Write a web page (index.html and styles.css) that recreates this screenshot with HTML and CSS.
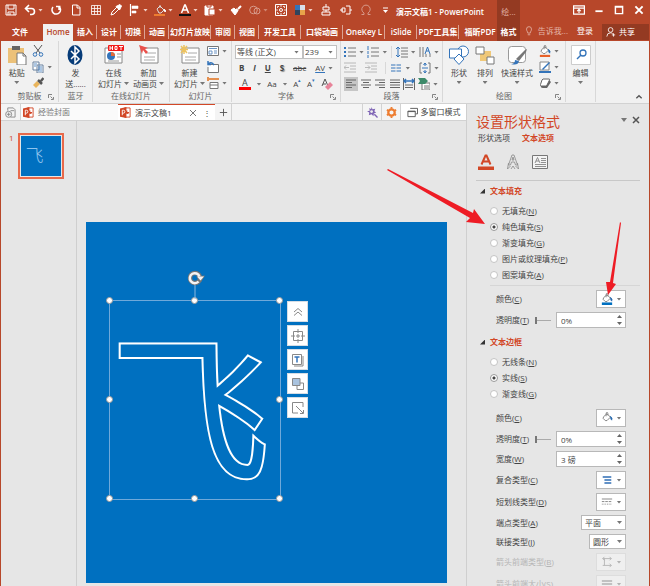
FILE: index.html
```html
<!DOCTYPE html>
<html lang="zh-CN">
<head>
    <meta charset="UTF-8">
    <meta name="viewport" content="width=device-width, initial-scale=1.0">
    <title>演示文稿1 - PowerPoint</title>
    <link rel="stylesheet" href="styles.css">
</head>
<body>

    <!-- Shared icons -->
    <svg class="sprite">
        <symbol id="ppt" viewBox="0 0 12 12">
            <path d="M5 1h6v10H5z" fill="#fff" stroke="#d24726"/>
            <path d="M8 3.500a2 2 0 1 0 2 2H8z" fill="#d24726"/>
            <path d="M0 1.500 7 0v12L0 10.500z" fill="#d24726"/>
            <path d="M2.500 9V3.500h1.200a1.500 1.500 0 0 1 0 3.200H2.500" fill="none" stroke="#fff"/>
        </symbol>
        <symbol id="bucket" viewBox="0 0 14 14">
            <path d="M3 5.500 7 2l4 4-4 4H5L2.500 7.500z" fill="#fff" stroke="#666" stroke-width=".9"/>
            <path d="M6 5V1.500a1 1 0 0 1 2 0V4" fill="none" stroke="#666" stroke-width=".8"/>
            <path d="M11 5q3 2 1.500 4.500Q11 9 11 5z" fill="#2b6cb0" stroke="#2b6cb0" stroke-width=".8"/>
        </symbol>
        <symbol id="launcher" viewBox="0 0 6 6">
            <path d="M.5 4V.5H4M2.500 2.500l2 2M5.500 3v2.500H3" fill="none" stroke="#777" stroke-width=".9"/>
        </symbol>
    </svg>

    <!-- Title bar -->
    <header class="titlebar">
        <div class="quick">
            <button class="qbtn" aria-label="保存"><svg viewBox="0 0 12 12"><path d="M1 1h10v10H1zM3 1v4h6V1M3 11V8h6v3M5 9v2"/></svg></button>
            <button class="qbtn split" aria-label="撤消"><svg viewBox="0 0 12 12"><path d="M5 1 1.500 4.500 5 8M2 4.500h5.500a3 3 0 0 1 0 6H6" stroke-width="1.600"/></svg><i class="caret"></i></button>
            <button class="qbtn" aria-label="重复"><svg viewBox="0 0 12 12"><path d="M9 2.500A4.300 4.300 0 1 1 3 3M9 6V2.300M6 2.500h4.500" stroke-width="1.500"/></svg></button>
            <button class="qbtn" aria-label="新建"><svg viewBox="0 0 12 12"><path d="M2.500 1h5L10 3.500V11H2.500zM7 1v3h3"/></svg></button>
            <button class="qbtn" aria-label="表格"><svg viewBox="0 0 12 12"><path d="M1.500 1.500h9v9h-9zM1.500 4.500h9M1.500 7.500h9M4.500 1.500v9M7.500 1.500v9" stroke-width=".8"/></svg></button>
            <button class="qbtn" aria-label="取色器"><svg viewBox="0 0 12 12"><path d="m1 11 1-3 5-5 2 2-5 5z"/><path d="m6 2.500 3.500 3.500L11.500 2 10 .5z" fill="#fff"/></svg></button>
            <button class="qbtn split" aria-label="对齐"><svg viewBox="0 0 12 12"><path d="M1.500 0v12" stroke-width="1.200"/><path d="M3 2h6v2.500H3zM3 7h4v2H3z" fill="#fff" stroke-width=".6"/></svg><i class="caret"></i></button>
            <button class="qbtn split" aria-label="填充颜色"><svg viewBox="0 0 12 12"><path d="m3 5 3-3 4 4-3 3H5zM6 4V1" stroke="#ddd"/><path d="M10 5q3 2 1 3z" fill="#fff"/><path d="M0 10h11v2H0z" fill="#ed7d31" stroke="none"/></svg><i class="caret"></i></button>
            <button class="qbtn split" aria-label="字体颜色"><svg viewBox="0 0 12 12"><path d="m2.500 9 3.200-8h.6l3.200 8M4 6h4" stroke-width="1.500"/><path d="M0 10h12v2H0z" fill="#111" stroke="none"/></svg><i class="caret"></i></button>
            <button class="qbtn split" aria-label="粘贴"><svg viewBox="0 0 12 12"><path d="M1 2h8v9H1z" fill="#fff"/><path d="M3 1h4v2H3z" stroke="#b7472a" fill="#fff"/><path d="M5 5h6v6H5z" fill="#fff" stroke="#b7472a"/></svg><i class="caret"></i></button>
            <button class="qbtn" aria-label="格式刷"><svg viewBox="0 0 12 12"><path d="m1 6 3-2 3.500 3.500L5 11z" fill="#fff"/><path d="m6 5 2 2M8 5l3-3" stroke-width="2"/></svg></button>
            <button class="qbtn split faded" aria-label="合并形状"><svg viewBox="0 0 12 12"><circle cx="4.500" cy="6" r="3.800"/><circle cx="8" cy="7" r="3"/></svg><i class="caret"></i></button>
            <button class="qbtn" aria-label="选择"><svg viewBox="0 0 12 12"><path d="M.5.5h11v11H.5z"/><path d="M6 1v2M6 9v2M1 6h2M9 6h2M2.500 4V2.500H4M8 2.500h1.500V4M9.500 8v1.500H8M4 9.500H2.500V8" stroke-width=".8"/><circle cx="6" cy="6" r="1.500"/></svg></button>
            <button class="qbtn split" aria-label="主题"><svg viewBox="0 0 12 12"><g stroke="none"><path d="M1 1h5v5H1z" fill="#3474ba"/><path d="M6 1h5v5H6z" fill="#d8dee8"/><path d="M1 6h5v5H1z" fill="#30445c"/><path d="M6 6h5v5H6z" fill="#e8a34a"/></g></svg><i class="caret"></i></button>
            <button class="qbtn" aria-label="水平居中"><svg viewBox="0 0 12 12"><path d="M6 0v3M3 3h6v3H3zM6 6v2M2 8h8v3H2z"/></svg></button>
            <button class="qbtn" aria-label="垂直居中"><svg viewBox="0 0 12 12"><path d="M0 6h3M2 4h3v4H2zM6 2h4v8H6M10 6h2"/></svg></button>
            <button class="qbtn faded" aria-label="符号"><svg viewBox="0 0 12 12"><path d="M1.500 10.500H4V9a4.200 4.200 0 1 1 4 0v1.500h2.500"/></svg></button>
            <button class="qbtn" aria-label="自定义"><svg viewBox="0 0 12 12"><path d="M3 4h5"/><path d="m3 6 2.500 3L8 6z" fill="#fff" stroke="none"/></svg></button>
            <h1 class="app-title">演示文稿1 - PowerPoint</h1>
        </div>
        <div class="context">绘...</div>
        <div class="window">
            <button aria-label="功能区选项"><svg viewBox="0 0 10 8"><path d="M.5.5h9v7h-9zM1 2.500h8M5 6.500V4M3.500 5 5 3.500 6.500 5"/></svg></button>
            <button aria-label="最小化"><svg viewBox="0 0 10 8"><path d="M2 5h6" stroke-width="1.500"/></svg></button>
            <button aria-label="最大化"><svg viewBox="0 0 10 8"><path d="M2 1h6v6H2zM2 1.500h6" stroke-width="1.200"/></svg></button>
            <button aria-label="关闭"><svg viewBox="0 0 10 8"><path d="m2 1 6 6M8 1 2 7" stroke-width="1.600"/></svg></button>
        </div>
    </header>

    <!-- Ribbon tabs -->
    <nav class="tabs">
        <div class="tab-list">
            <a href="#" class="tab file">文件</a>
            <a href="#" class="tab active">Home</a>
            <a href="#" class="tab">插入</a>
            <a href="#" class="tab">设计</a>
            <a href="#" class="tab">切换</a>
            <a href="#" class="tab">动画</a>
            <a href="#" class="tab wide">幻灯片放映</a>
            <a href="#" class="tab">审阅</a>
            <a href="#" class="tab">视图</a>
            <a href="#" class="tab wide">开发工具</a>
            <a href="#" class="tab wide">口袋动画</a>
            <a href="#" class="tab wide">OneKey L</a>
            <a href="#" class="tab mid">iSlide</a>
            <a href="#" class="tab wide">PDF工具集</a>
            <a href="#" class="tab wide">福昕PDF</a>
        </div>
        <a href="#" class="tab context-tab">格式</a>
        <div class="account">
            <a href="#" class="tell"><svg viewBox="0 0 8 12"><path d="M2.500 8.500C2.500 6.500 1 6 1 3.800a3 3 0 0 1 6 0c0 2.200-1.500 2.700-1.500 4.700zM2.500 10.500h3"/></svg>告诉我...</a>
            <a href="#">登录</a>
            <a href="#" class="share"><svg viewBox="0 0 12 12"><circle cx="5.500" cy="3.500" r="2.800"/><path d="M1 11.500q0-4.500 4.500-4.500 1.500 0 2.500 1M9 7.500v4M7 9.500h4"/></svg>共享</a>
        </div>
    </nav>

    <!-- Ribbon -->
    <section class="ribbon">
        <div class="group clipboard">
            <div class="tools">
                <button class="big"><svg viewBox="0 0 20 20"><path d="M1 3h16v15H1z" fill="#ecc179"/><path d="M5 1h8v4H5z" fill="#666"/><path d="M10 8h6l3 3v9h-9z" fill="#fff" stroke="#777"/><path d="M16 8v3h3" fill="none" stroke="#777"/></svg>粘贴<i class="caret"></i></button>
                <div class="stack">
                    <button aria-label="剪切"><svg viewBox="0 0 12 12"><path d="m2 0 6 8M10 0 4 8" stroke="#555" fill="none"/><g fill="none" stroke="#3474ba"><circle cx="3" cy="9.500" r="1.800"/><circle cx="9" cy="9.500" r="1.800"/></g></svg></button>
                    <button aria-label="复制"><svg viewBox="0 0 12 12"><path d="M1 1h6v8H1zM5 4h6v8H5z" fill="#fff" stroke="#68819f"/><path d="M2 3h3M2 5h2M6 6h4M6 8h4M6 10h4" stroke="#3474ba" stroke-width=".8"/></svg><i class="caret"></i></button>
                    <button aria-label="格式刷"><svg viewBox="0 0 12 12"><path d="m1 8 4-4 3 3-4 4z" fill="#e9b55d"/><path d="m6 3 4 4M9 4l2.500-3" stroke="#555" stroke-width="2.500"/></svg></button>
                </div>
            </div>
            <div class="group-name">剪贴板<svg class="launch"><use href="#launcher"/></svg></div>
        </div>
        <div class="group bluetooth">
            <div class="tools">
                <button class="big"><svg viewBox="0 0 20 20"><ellipse cx="10" cy="10" rx="7.500" ry="10" fill="#063b78"/><path d="m6 6 8 8-4 4V2l4 4-8 8" fill="none" stroke="#fff" stroke-width="1.500"/></svg>发<span>送......</span></button>
            </div>
            <div class="group-name">蓝牙</div>
        </div>
        <div class="group online">
            <div class="tools">
                <button class="big"><svg viewBox="0 0 20 20"><path d="M1 3h17v15H1z" fill="#fff" stroke="#888"/><circle cx="7" cy="11" r="4" fill="#3474ba"/><path d="M7 11V7a4 4 0 0 1 4 4z" fill="#e36b3a"/><path d="M13 9h4M13 12h4M4 16h11" stroke="#999"/><rect x="4" width="16" height="6" rx="1" fill="#f21818"/><path d="M6 1v4M8.500 1v4M6 3h2.500M11 1.500h2v3h-2zM15 1.500h4M17 1.500V5" fill="none" stroke="#fff"/></svg>在线<span>幻灯片<i class="caret"></i></span></button>
                <button class="big"><svg viewBox="0 0 20 20"><path d="M2 3h17v15H2z" fill="#fff" stroke="#888"/><path d="M8 8h9M5 12h11M5 15h11" stroke="#aaa"/><path d="m0 0 9 3-3 1 3 3-2 2-3-4-1 4z" fill="#e9504b"/></svg>新加<span>动画页<i class="caret"></i></span></button>
            </div>
            <div class="group-name">在线幻灯片</div>
        </div>
        <div class="group slides">
            <div class="tools">
                <button class="big"><svg viewBox="0 0 20 20"><path d="M2 3h17v15H2z" fill="#fff" stroke="#888"/><path d="M8 8h9M5 12h11M5 15h11" stroke="#aaa"/><path d="M4 0v9M0 4.500h8M1 1l6 7M7 1 1 8" stroke="#ecc25f" stroke-width="1.500"/></svg>新建<span>幻灯片<i class="caret"></i></span></button>
                <div class="stack">
                    <button aria-label="版式"><svg viewBox="0 0 12 12"><path d="M.5 1.500h11v9H.5z" fill="#fff" stroke="#777"/><path d="M2 3.500h8M2 6h3v3H2zM7 6h3M7 8h3" fill="none" stroke="#6a93c4"/></svg><i class="caret"></i></button>
                    <button aria-label="重置"><svg viewBox="0 0 12 12"><path d="M3 3.500h8.500v8H1V6" fill="#fff" stroke="#777"/><path d="M1 3q3-3 6 1M1 0v3.500h3" fill="none" stroke="#3474ba" stroke-width="1.500"/></svg></button>
                    <button aria-label="节"><svg viewBox="0 0 12 12"><path d="M0 2h12M1 0v4" stroke="#e59050" stroke-width="2"/><path d="M3 5.500h8v6H3zM3 8h8" fill="#fff" stroke="#777"/></svg><i class="caret"></i></button>
                </div>
            </div>
            <div class="group-name">幻灯片</div>
        </div>
        <div class="group font">
            <div class="rows">
                <div class="row">
                    <span class="combo name"><input type="text" value="等线 (正文)" aria-label="字体"><i class="caret"></i></span><span class="combo size"><input type="text" value="239" aria-label="字号"><i class="caret"></i></span>
                </div>
                <div class="row letters">
                    <button><b>B</b></button>
                    <button><b><em>I</em></b></button>
                    <button><b><u>U</u></b></button>
                    <button><b class="shadow">S</b></button>
                    <button><s>abc</s></button>
                    <button class="spacing"><u>AV</u><i class="caret"></i></button>
                </div>
                <div class="row letters">
                    <button class="ink">A</button><i class="caret"></i>
                    <button>Aa</button><i class="caret"></i>
                    <button class="grow">A<sup>▴</sup></button>
                    <button>A<sup>▾</sup></button>
                    <button aria-label="清除格式"><svg viewBox="0 0 12 12"><path d="m1 8 3-7 3 7M2 6h3" fill="none" stroke="#555"/><path d="m4 9 5-5 3 3-5 5z" fill="#e8849a"/></svg></button>
                </div>
            </div>
            <div class="group-name">字体<svg class="launch"><use href="#launcher"/></svg></div>
        </div>
        <div class="group para">
            <div class="rows">
                <div class="row">
                    <button aria-label="项目符号"><svg viewBox="0 0 12 12"><path d="M4 2h8M4 6h8M4 10h8" stroke="#777"/><path d="M0 2h2M0 6h2M0 10h2" stroke="#3474ba" stroke-width="2"/></svg><i class="caret"></i></button>
                    <button aria-label="编号"><svg viewBox="0 0 12 12"><path d="M4 2h8M4 6h8M4 10h8" stroke="#777"/><path d="M1 0v4M1 5v3M1 9v3" stroke="#3474ba"/></svg><i class="caret"></i></button>
                    <button class="ruled" aria-label="行距"><svg viewBox="0 0 12 12"><path d="M5 2h7M5 5h7M5 8h7M5 11h7" stroke="#777"/><path d="M2 1v10M0 3l2-2 2 2M0 9l2 2 2-2" fill="none" stroke="#3474ba"/></svg><i class="caret"></i></button>
                    <button aria-label="文字方向"><svg viewBox="0 0 12 12"><path d="M1 1v10M4 1v10M7 8v3M11 8v3" stroke="#777"/><path d="m6 8 2.500-7L11 8M7 5h3" fill="none" stroke="#3474ba"/></svg><i class="caret"></i></button>
                </div>
                <div class="row">
                    <button class="faded" aria-label="减少缩进"><svg viewBox="0 0 12 12"><path d="M0 1h12M6 4h6M6 7h6M0 10h12M0 5.500h5M2 3.500l-2 2 2 2" fill="none" stroke="#777"/></svg></button>
                    <button class="faded" aria-label="增加缩进"><svg viewBox="0 0 12 12"><path d="M0 1h12M6 4h6M6 7h6M0 10h12M0 5.500h5M3 3.500l2 2-2 2" fill="none" stroke="#777"/></svg></button>
                    <button class="ruled" aria-label="分栏"><svg viewBox="0 0 12 12"><path d="M1 3h4.500M1 6h4.500M1 9h4.500M6.500 3H11M6.500 6H11M6.500 9H11" stroke="#3474ba"/></svg><i class="caret"></i></button>
                    <button class="last" aria-label="对齐文本"><svg viewBox="0 0 12 12"><path d="M3 1H1v10h2M9 1h2v10H9" fill="none" stroke="#777"/><path d="M3 6h6M6 1v3M6 8v3M4.500 3 6 1l1.500 2M4.500 9 6 11l1.500-2" fill="none" stroke="#3474ba"/></svg><i class="caret"></i></button>
                </div>
                <div class="row tight">
                    <button class="on" aria-label="左对齐"><svg viewBox="0 0 12 12"><path d="M1 2h10M1 4.500h6M1 7h10M1 9.500h6" stroke="#666"/></svg></button>
                    <button aria-label="居中"><svg viewBox="0 0 12 12"><path d="M1 2h10M3 4.500h6M1 7h10M3 9.500h6" stroke="#666"/></svg></button>
                    <button aria-label="右对齐"><svg viewBox="0 0 12 12"><path d="M1 2h10M5 4.500h6M1 7h10M5 9.500h6" stroke="#666"/></svg></button>
                    <button aria-label="两端对齐"><svg viewBox="0 0 12 12"><path d="M1 2h10M1 4.500h10M1 7h10M1 9.500h10" stroke="#666"/></svg></button>
                    <button aria-label="分散对齐"><svg viewBox="0 0 12 12"><path d="M.5 0v12M11.500 0v12M2 7h8M2 9.500h8" stroke="#666"/><path d="M1 3h10M3 1 1 3l2 2M9 1l2 2-2 2" fill="none" stroke="#3474ba" stroke-width="1.500"/></svg></button>
                    <button aria-label="SmartArt"><svg viewBox="0 0 12 12"><path d="M4 5h8v7H4zM6 8h5M6 10h5" fill="#fff" stroke="#777"/><path d="M0 0h7l3 3-3 3H0l2-3z" fill="#3d8a6a"/></svg><i class="caret"></i></button>
                </div>
            </div>
            <div class="group-name">段落<svg class="launch"><use href="#launcher"/></svg></div>
        </div>
        <div class="group draw">
            <div class="tools">
                <button class="big"><svg viewBox="0 0 20 20"><g fill="#fff" stroke="#3474ba"><circle cx="14" cy="6.500" r="5.500"/><path d="M.5 4h12v9H.5z"/><path d="m10 9 5 5-5 5.500L5 14z"/></g></svg>形状<i class="caret"></i></button>
                <button class="big"><svg viewBox="0 0 20 20"><path d="M5 6h11v10H5z" fill="#f0c878"/><path d="M1 2h8v7H1zM12 12h7v7h-7z" fill="#fff" stroke="#777"/></svg>排列<i class="caret"></i></button>
                <button class="big"><svg viewBox="0 0 20 20"><rect x="1.500" y="1.500" width="17" height="16" rx="3" fill="#fff" stroke="#999"/><path d="m9 14 9-9 2-1-1 3-7 9z" fill="#777"/><path d="M4 19q4 0 4-4l4 1q-1 5-8 3z" fill="#3474ba"/></svg>快速样式<i class="caret"></i></button>
                <div class="stack">
                    <button aria-label="形状填充"><svg viewBox="0 0 14 14"><use href="#bucket"/><path d="M1 11.500h12V14H1z" fill="#e8622a"/></svg><i class="caret"></i></button>
                    <button aria-label="形状轮廓"><svg viewBox="0 0 12 12"><path d="M1 1h9v8H1z" fill="#fff" stroke="#888"/><path d="m3 8 7-7 1 1-7 7z" fill="#3474ba"/><path d="M0 10h12v2H0z" fill="#3474ba"/></svg><i class="caret"></i></button>
                    <button aria-label="形状效果"><svg viewBox="0 0 12 12"><path d="M2 8q-1 3 2 3h4l4-6-2-2z" fill="#666"/><path d="M4 2h6q1 0 .5 1L8 8q-.5 1-1.500 1h-4q-1.500 0-1-1.500L3 3z" fill="#fff" stroke="#666"/></svg><i class="caret"></i></button>
                </div>
            </div>
            <div class="group-name">绘图<svg class="launch"><use href="#launcher"/></svg></div>
        </div>
        <div class="group edit">
            <div class="tools">
                <button class="big"><svg viewBox="0 0 20 20"><path d="M.5.5h19v19H.5z" fill="#fff" stroke="#ccc"/><circle cx="12" cy="8" r="3" fill="none" stroke="#3474ba" stroke-width="1.300"/><path d="m10 10-4 4" stroke="#3474ba" stroke-width="1.500"/></svg>编辑<i class="caret"></i></button>
            </div>
        </div>
        <button class="collapse" aria-label="折叠功能区"><svg viewBox="0 0 6 6"><path d="m1 4 2-2 2 2" fill="none" stroke="#555"/></svg></button>
    </section>

    <main class="main">
        <div class="left">
            <!-- Document tabs -->
            <div class="docs">
                <button class="home" aria-label="文档"><svg viewBox="0 0 12 12"><path d="M3 4V1h6l2 2v8H6" fill="none" stroke="#888"/><circle cx="4" cy="8" r="3.300" fill="none" stroke="#888"/><path d="M2 8h4M4 6v4M6 4h4" stroke="#888"/></svg></button>
                <a href="#" class="doc"><svg><use href="#ppt"/></svg>经验封面</a>
                <a href="#" class="doc current"><svg><use href="#ppt"/></svg>演示文稿1<span class="doc-end"><svg viewBox="0 0 8 8"><path d="m1 1 6 6M7 1 1 7" stroke="#777"/></svg>⋮</span></a>
                <button class="add" aria-label="新标签"><svg viewBox="0 0 12 12"><path d="M6 2v8M2 6h8" stroke="#555"/></svg></button>
                <div class="doc-tools">
                    <button aria-label="工具"><svg viewBox="0 0 12 12"><path d="m5 0 1 2.500L9 2 8 4.500 10 6 7.500 7 7 10 5 8 2 9l.5-3L0 4.500 3 4 2.500 1 4.500 2.500z" fill="#7f65b5"/><circle cx="5" cy="5" r="1.500" fill="#eee"/><path d="m8 8 3.500 3.500" stroke="#7f65b5" stroke-width="1.500"/></svg></button>
                    <button aria-label="设置"><svg viewBox="0 0 12 12"><circle cx="6" cy="6" r="3.500" fill="none" stroke="#ed7d31" stroke-width="2.500"/><path d="M6 0v2M6 10v2M1 3l1.500 1M11 3 9.500 4M1 9l1.500-1M11 9 9.500 8" stroke="#ed7d31" stroke-width="2"/></svg></button>
                    <button class="multi"><svg viewBox="0 0 12 12"><path d="M3.500 1.500h8v6h-2M1 4.500h8v6H1zM1 5h8" fill="none" stroke="#555"/></svg>多窗口模式</button>
                </div>
            </div>
            <div class="work">
                <aside class="thumbs">
                    <span>1</span>
                    <a href="#" class="thumb">飞</a>
                </aside>
                <div class="canvas">
                    <div class="slide">
                        <div class="frame">
                            <span class="glyph">飞</span>
                            <i class="dot tl"></i><i class="dot tc"></i><i class="dot tr"></i>
                            <i class="dot ml"></i><i class="dot mr"></i>
                            <i class="dot bl"></i><i class="dot bc"></i><i class="dot br"></i>
                            <svg class="rotate" viewBox="0 0 16 28"><path d="M8 14v14" stroke="#8ab8e0"/><circle cx="8" cy="7" r="5" fill="none" stroke="#777" stroke-width="4.500"/><path d="m9 5.500 9-1L14 11z" fill="#777"/><path d="M11.500 10.500a5 5 0 1 1 1-5" fill="none" stroke="#f4f4f4" stroke-width="2.500"/><path d="M10 5.500h7L13.500 9.500z" fill="#f4f4f4"/></svg>
                        </div>
                        <div class="floaters">
                            <button aria-label="收起"><svg viewBox="0 0 14 14"><path d="m3 7 4-3.500L11 7M3 10.500 7 7l4 3.500"/></svg></button>
                            <button aria-label="居中"><svg viewBox="0 0 14 14"><path d="M2.500 2.500h9v9h-9zM7 0v4M7 10v4M0 7h4M10 7h4"/><path d="M6 6h2v2H6z"/></svg></button>
                            <button aria-label="文字"><svg viewBox="0 0 14 14"><path d="M1.500 1.500h9v10h-9zM12 3v10H3"/><path d="M3.500 4h5M6 4v5.500" stroke="#3474ba" stroke-width="1.500"/></svg></button>
                            <button aria-label="图层"><svg viewBox="0 0 14 14"><path d="M6 6h6.500v6.500H6z"/><path d="M1.500 1.500H9v7H1.500z" fill="#a9c3df"/></svg></button>
                            <button aria-label="缩放"><svg viewBox="0 0 14 14"><path d="M12 6V1.500H1.500V12H7M5 5l7 7M12.500 9v3.500H9"/></svg></button>
                        </div>
                    </div>
                </div>
            </div>
        </div>

        <!-- Format pane -->
        <aside class="pane">
            <div class="pane-head">
                <h2>设置形状格式</h2>
                <button aria-label="选项"><i class="caret big-caret"></i></button>
                <button aria-label="关闭"><svg viewBox="0 0 8 8"><path d="m1 1 6 6M7 1 1 7" stroke="#555" stroke-width="1.500"/></svg></button>
            </div>
            <div class="pane-tabs">
                <a href="#">形状选项</a>
                <a href="#" class="on">文本选项</a>
            </div>
            <div class="pane-icons">
                <button aria-label="文本填充"><svg viewBox="0 0 16 16"><path d="m3.500 10.500 4-9h1l4 9M5 7.500h6" fill="none" stroke="#d24726" stroke-width="2"/><path d="M0 12.500h16V16H0z" fill="#d24726"/></svg></button>
                <button aria-label="文字效果"><svg viewBox="0 0 16 16"><path d="M3.500 11 7 1h2l3.500 10h-2l-1-3h-3l-1 3zM7 6h2L8 3zM3.500 9 2.500 15l3-3M12.500 9l1 6-3-3M6 15l2-3 2 3" fill="none" stroke="#888" stroke-width=".8"/></svg></button>
                <button aria-label="文本框"><svg viewBox="0 0 16 16"><path d="M.5 1.500h15v13H.5z" fill="#f4f4f4" stroke="#777"/><path d="M3 9 5.500 3.500 8 9M4 7h3M9 4.500h5M9 6.500h5M9 8.500h5M3 10.500h11M3 12.500h11" fill="none" stroke="#777" stroke-width=".8"/></svg></button>
            </div>

            <h3>文本填充</h3>
            <div class="radios">
                <label><input type="radio" name="fill"> 无填充(<u>N</u>)</label>
                <label><input type="radio" name="fill" checked> 纯色填充(<u>S</u>)</label>
                <label><input type="radio" name="fill"> 渐变填充(<u>G</u>)</label>
                <label><input type="radio" name="fill"> 图片或纹理填充(<u>P</u>)</label>
                <label><input type="radio" name="fill"> 图案填充(<u>A</u>)</label>
            </div>
            <div class="fields ruled-top">
                <div class="field"><span>颜色(<u>C</u>)</span><button class="pick" aria-label="填充颜色"><svg viewBox="0 0 14 14"><use href="#bucket"/><path d="M1 11h12v3H1z" fill="#0070c0"/></svg><i class="caret"></i></button></div>
                <div class="field"><label for="fillAlpha">透明度(<u>T</u>)</label><input type="range" value="0" aria-label="填充透明度"><span class="spin"><input type="text" id="fillAlpha" value="0%"><i class="up"></i><i class="down"></i></span></div>
            </div>

            <h3>文本边框</h3>
            <div class="radios">
                <label><input type="radio" name="line"> 无线条(<u>N</u>)</label>
                <label><input type="radio" name="line" checked> 实线(<u>S</u>)</label>
                <label><input type="radio" name="line"> 渐变线(<u>G</u>)</label>
            </div>
            <div class="fields">
                <div class="field"><span>颜色(<u>C</u>)</span><button class="pick" aria-label="线条颜色"><svg viewBox="0 0 14 14"><use href="#bucket"/></svg><i class="caret"></i></button></div>
                <div class="field"><label for="lineAlpha">透明度(<u>T</u>)</label><input type="range" value="0" aria-label="线条透明度"><span class="spin"><input type="text" id="lineAlpha" value="0%"><i class="up"></i><i class="down"></i></span></div>
                <div class="field"><label for="lineWidth">宽度(<u>W</u>)</label><span class="spin"><input type="text" id="lineWidth" value="3 磅"><i class="up"></i><i class="down"></i></span></div>
                <div class="field"><span>复合类型(<u>C</u>)</span><button class="pick" aria-label="复合类型"><svg viewBox="0 0 14 14"><path d="M2 3.500h10M4 7h8M4 10.500h8" stroke="#2f6db5" stroke-width="1.500"/></svg><i class="caret"></i></button></div>
                <div class="field"><span>短划线类型(<u>D</u>)</span><button class="pick" aria-label="短划线类型"><svg viewBox="0 0 14 14"><path d="M1 3.500h12" stroke="#777"/><path d="M1 6.500h12" stroke="#777" stroke-dasharray="3 1"/><path d="M1 9.500h12" stroke="#777" stroke-dasharray="1 1"/></svg><i class="caret"></i></button></div>
                <div class="field"><label for="cap">端点类型(<u>A</u>)</label><span class="drop"><select id="cap"><option>平面</option><option>圆形</option></select><i class="caret"></i></span></div>
                <div class="field"><label for="join">联接类型(<u>J</u>)</label><span class="drop small"><select id="join"><option>圆形</option><option>斜角</option></select><i class="caret"></i></span></div>
                <div class="field off"><span>箭头前端类型(<u>B</u>)</span><button class="pick" disabled aria-label="箭头前端类型"><svg viewBox="0 0 14 14"><path d="M2 3h10M2 11h10M4 3v8M10 1l2 2-2 2M10 9l2 2-2 2M4 1 2 3l2 2" fill="none" stroke="#777"/></svg><i class="caret"></i></button></div>
                <div class="field off"><span>箭头前端大小(<u>S</u>)</span><button class="pick" disabled aria-label="箭头前端大小"><svg viewBox="0 0 14 14"><path d="M1 3.500h12M1 7h12M1 10.500h12" stroke="#777" stroke-width="1.500"/></svg><i class="caret"></i></button></div>
            </div>
        </aside>
    </main>

    <!-- Pointer arrows -->
    <svg class="arrow first" viewBox="0 0 98 56"><path d="m1 0 85 44 1-4 11 15-19-2 4-4L0 1z" fill="#ee1c25"/></svg>
    <svg class="arrow second" viewBox="0 0 18 74"><path d="M15 0 5 60H1l2 13 8-11-3-1L16 1z" fill="#ee1c25"/></svg>

</body>
</html>
```

FILE: styles.css
```css
* {
    margin: 0;
    padding: 0;
    box-sizing: border-box;
}

body {
    height: 100vh;
    display: flex;
    flex-direction: column;
    overflow: hidden;
    position: relative;
    border-left: 1px solid #b7472a;
    border-right: 1px solid #b7472a;
    background-color: #e6e6e6;
    color: #444;
    font-family: "Open Sans", "Noto Sans CJK SC", sans-serif;
    font-size: 8px;
    line-height: 10px;
}

a {
    color: inherit;
    text-decoration: none;
}

button,
input,
select {
    font: inherit;
    color: inherit;
    border: none;
    background: none;
}

button {
    display: flex;
    align-items: center;
    justify-content: center;
}

svg {
    display: block;
    flex: none;
}

.sprite {
    position: absolute;
    width: 0;
    height: 0;
}

.caret {
    flex: none;
    width: 5px;
    height: 3px;
    background-color: currentColor;
    clip-path: polygon(0 0, 100% 0, 50% 100%);
}

/* Title bar */
.titlebar,
.tabs {
    flex: none;
    display: flex;
    background-color: #b7472a;
    color: white;
}

.titlebar {
    height: 20px;
}

.quick,
.tab-list {
    flex: none;
    width: 496px;
    display: flex;
}

.qbtn {
    flex: none;
    width: 20px;
    height: 20px;
}

.qbtn.split {
    width: 25px;
    gap: 2px;
}

.qbtn svg {
    width: 12px;
    height: 12px;
    fill: none;
    stroke: white;
}

.faded {
    opacity: 0.45;
}

.app-title {
    flex: 1;
    padding: 7px 13px 0 0;
    font-size: 8px;
    font-weight: 600;
    text-align: right;
    white-space: nowrap;
}

.context,
.context-tab {
    flex: none;
    width: 23px;
    background-color: #943a22;
    text-align: center;
}

.context {
    padding-top: 7px;
    color: #e0b0a2;
}

.window {
    flex: 1;
    display: flex;
    justify-content: flex-end;
}

.window button {
    width: 20px;
}

.window svg {
    width: 12px;
    height: 10px;
    fill: none;
    stroke: white;
}

/* Ribbon tabs */
.tabs {
    height: 21px;
    align-items: stretch;
}

.tab {
    flex: none;
    width: 24px;
    padding: 7px 0 4px;
    font-weight: 600;
    text-align: center;
    white-space: nowrap;
    overflow: hidden;
    background-image: linear-gradient(#dba394, #dba394);
    background-size: 1px 14px;
    background-position: right 5px;
    background-repeat: no-repeat;
}

.tab.file {
    width: 42px;
    padding-right: 4px;
    background-image: none;
}

.tab.active {
    width: 30px;
    margin-top: 4px;
    padding-top: 3px;
    background: #f1f1f1;
    color: #b7472a;
}

.tab.wide {
    width: 42px;
}

.tab.mid {
    width: 32px;
}

.tab.context-tab {
    width: 23px;
    background: #943a22;
}

.account {
    flex: 1;
    display: flex;
    align-items: center;
    justify-content: flex-end;
    gap: 9px;
    white-space: nowrap;
}

.account svg {
    width: 10px;
    height: 10px;
    fill: none;
    stroke: currentColor;
}

.tell {
    display: flex;
    gap: 4px;
    color: #e3b4a7;
}

.share {
    align-self: stretch;
    width: 47px;
    display: flex;
    align-items: center;
    padding-left: 4px;
    gap: 3px;
    margin: 4px 0 1px;
    background-color: #943a22;
}

/* Ribbon */
.ribbon {
    flex: none;
    height: 63px;
    display: flex;
    background-color: #f1f1f1;
    border-bottom: 1px solid #d2d2d2;
}

.group {
    flex: none;
    display: flex;
    flex-direction: column;
    justify-content: space-between;
    padding: 4px 3px 1px;
    margin-bottom: 1px;
    border-right: 1px solid #d8d8d8;
}

.tools {
    display: flex;
    justify-content: space-around;
}

.big {
    flex-direction: column;
    justify-content: flex-start;
    white-space: nowrap;
    line-height: 11px;
}

.big svg {
    width: 20px;
    height: 20px;
    margin-bottom: 2px;
}

.big > .caret {
    margin-top: 3px;
}

.big span {
    display: flex;
    align-items: center;
    gap: 2px;
}

.caret {
    color: #777;
}

.titlebar .caret {
    color: #f0d0c6;
}

.group-name {
    position: relative;
    text-align: center;
    color: #666;
}

.launch {
    position: absolute;
    right: 1px;
    bottom: 1px;
    width: 6px;
    height: 6px;
}

.stack {
    display: flex;
    flex-direction: column;
    gap: 4px;
}

.stack button,
.row button {
    justify-content: flex-start;
    gap: 3px;
}

.stack svg,
.row svg {
    width: 12px;
    height: 12px;
}

.clipboard {
    width: 58px;
}

.bluetooth {
    width: 34px;
}

.online {
    width: 77px;
}

.slides {
    width: 62px;
}

.font {
    width: 109px;
}

.para {
    width: 102px;
}

.draw {
    width: 123px;
}

.edit {
    width: 30px;
}

.rows {
    display: flex;
    flex-direction: column;
    gap: 2px;
}

.row {
    display: flex;
    align-items: center;
    justify-content: space-between;
    height: 14px;
}

.combo {
    display: flex;
    align-items: center;
    height: 14px;
    padding: 0 3px 0 1px;
    background-color: white;
    border: 1px solid #c0c0c0;
}

.combo input {
    flex: 1;
    min-width: 0;
}

.combo.name {
    width: 68px;
}

.combo.size {
    width: 34px;
}

.letters {
    padding: 0 4px;
    line-height: 12px;
}

.letters .shadow {
    text-shadow: 1px 1px 1px #888;
}

.letters .spacing u {
    text-decoration-color: #3474ba;
}

.letters .ink {
    padding: 0 3px;
    font-size: 9px;
    line-height: 9px;
    border-bottom: 3px solid #f00;
}

.letters sup {
    font-size: 5px;
    line-height: 5px;
    align-self: flex-start;
    color: #3474ba;
    margin-left: -3px;
}

.ruled {
    padding-left: 4px;
    border-left: 1px solid #d8d8d8;
}

.row .on {
    background-color: #c6c6c6;
}

.tight button {
    height: 14px;
    padding: 0 1px;
}

.collapse {
    align-self: flex-end;
    margin-left: auto;
    width: 20px;
    height: 12px;
}

.collapse svg {
    width: 8px;
    height: 8px;
}

/* Main area */
.main {
    flex: 1;
    min-height: 0;
    display: flex;
}

.left {
    flex: 1;
    min-width: 0;
    display: flex;
    flex-direction: column;
}

.docs {
    flex: none;
    height: 17px;
    display: flex;
    background-color: #f4f4f4;
    border-bottom: 1px solid #d2d2d2;
}

.docs svg {
    width: 11px;
    height: 11px;
}

.home {
    width: 20px;
    border-right: 1px solid #d2d2d2;
}

.doc {
    width: 97px;
    display: flex;
    align-items: center;
    gap: 4px;
    padding-left: 2px;
    color: #777;
    background-color: #fafafa;
}

.doc.current {
    color: #444;
    background-color: white;
    border-top: 1px solid #d24726;
}

.doc-end {
    flex: 1;
    display: flex;
    align-items: center;
    justify-content: flex-end;
    gap: 6px;
    padding-right: 4px;
}

.doc-end svg {
    width: 8px;
    height: 8px;
}

.add {
    width: 17px;
    border-right: 1px solid #d2d2d2;
}

.doc-tools {
    flex: 1;
    display: flex;
    justify-content: flex-end;
}

.doc-tools button {
    width: 19px;
    border-left: 1px solid #d2d2d2;
}

.doc-tools .multi {
    width: 66px;
    gap: 3px;
    background-color: white;
    white-space: nowrap;
}

.work {
    flex: 1;
    min-height: 0;
    display: flex;
}

.thumbs {
    flex: none;
    width: 76px;
    display: flex;
    align-items: flex-start;
    gap: 4px;
    padding: 12px 8px;
    border-right: 1px solid #cfcfcf;
    color: #d24726;
}

.thumb {
    width: 46px;
    height: 46px;
    padding: 11px 0 0 6px;
    background-color: #0070c0;
    border: 2px solid #e8694a;
    outline: 1px solid #e6e6e6;
    outline-offset: -3px;
    color: #8fc4ee;
    font-size: 18px;
    font-weight: 300;
    line-height: 18px;
}

.canvas {
    flex: 1;
    min-width: 0;
    padding: 101px 19px 0 9px;
}

.slide {
    position: relative;
    aspect-ratio: 1;
    background-color: #0070c0;
}

.frame {
    position: absolute;
    left: 23px;
    top: 78px;
    width: 172px;
    height: 200px;
    border: 1px solid #6fa9da;
}

.glyph {
    position: absolute;
    left: 0;
    top: 19px;
    color: #0070c0;
    font-family: "Noto Sans CJK SC", sans-serif;
    font-size: 160px;
    line-height: 160px;
    -webkit-text-stroke: 4px white;
    paint-order: stroke fill;
}

.dot {
    position: absolute;
    width: 7px;
    height: 7px;
    margin: -4px;
    border-radius: 50%;
    background-color: white;
    border: 1px solid #999;
}

.tl, .tc, .tr { top: 0; }
.ml, .mr { top: 50%; }
.bl, .bc, .br { top: 100%; }
.tl, .ml, .bl { left: 0; }
.tc, .bc { left: 50%; }
.tr, .mr, .br { left: 100%; }

.rotate {
    position: absolute;
    left: 77px;
    top: -30px;
    width: 16px;
    height: 28px;
    overflow: visible;
}

.floaters {
    position: absolute;
    left: 201px;
    top: 79px;
    display: flex;
    flex-direction: column;
    gap: 3px;
}

.floaters button {
    width: 21px;
    height: 21px;
    background-color: white;
    border: 1px solid #d5dde5;
}

.floaters svg {
    width: 14px;
    height: 14px;
    fill: none;
    stroke: #888;
}

/* Format pane */
.pane {
    flex: none;
    width: 183px;
    padding: 8px 9px 0;
    border-left: 1px solid #cfcfcf;
    overflow: hidden;
}

.pane-head {
    display: flex;
    align-items: flex-start;
    gap: 5px;
}

.pane-head h2 {
    flex: 1;
    font-size: 14px;
    font-weight: 400;
    line-height: 20px;
    color: #d24726;
}

.pane-head button {
    height: 16px;
}

.pane-head svg {
    width: 8px;
    height: 8px;
}

.big-caret {
    width: 6px;
    height: 4px;
}

.pane-tabs {
    display: flex;
    gap: 12px;
    padding: 1px 2px;
}

.pane-tabs .on {
    color: #d24726;
    font-weight: 700;
}

.pane-icons {
    display: flex;
    gap: 11px;
    padding: 10px 2px;
    border-bottom: 1px solid #c8c8c8;
}

.pane-icons svg {
    width: 16px;
    height: 16px;
}

h3 {
    display: flex;
    align-items: center;
    gap: 5px;
    padding: 5px 4px;
    font-size: 8px;
    font-weight: 700;
    color: #d24726;
}

h3::before {
    content: "";
    width: 5px;
    height: 5px;
    background-color: #333;
    clip-path: polygon(100% 0, 100% 100%, 0 100%);
}

.radios {
    padding: 2px 14px 1px;
}

.radios label {
    display: flex;
    align-items: center;
    height: 16px;
}

.radios input {
    appearance: none;
    width: 8px;
    height: 8px;
    margin-right: 4px;
    border: 1px solid #c4c4c4;
    border-radius: 50%;
    background-color: white;
}

.radios input:checked {
    border-color: #999;
    background-image: radial-gradient(#444 0 1px, transparent 2px);
}

.fields {
    display: flex;
    flex-direction: column;
    gap: 4px;
    padding: 6px 14px 4px 20px;
}

.ruled-top {
    background: linear-gradient(#d6d6d6, #d6d6d6) 14px 1px / 100% 1px no-repeat;
}

.field {
    display: flex;
    align-items: center;
    white-space: nowrap;
}

.field > :last-child {
    margin-left: auto;
}

.pick {
    width: 30px;
    height: 18px;
    gap: 4px;
    background-color: white;
    border: 1px solid #b8b8b8;
}

.pick svg {
    width: 12px;
    height: 12px;
}

.field input[type="range"] {
    appearance: none;
    width: 16px;
    height: 7px;
    margin-left: 6px;
    background: linear-gradient(#aaa, #aaa) center / 100% 1px no-repeat;
}

.field input[type="range"]::-webkit-slider-thumb {
    appearance: none;
    width: 2px;
    height: 7px;
    background-color: #777;
}

.spin {
    position: relative;
    width: 70px;
    height: 16px;
    background-color: white;
    border: 1px solid #b8b8b8;
}

.spin input {
    width: 100%;
    height: 14px;
    padding: 0 14px 0 4px;
}

.up,
.down {
    position: absolute;
    right: 3px;
    width: 5px;
    height: 3px;
    background-color: #666;
}

.up {
    top: 2px;
    clip-path: polygon(50% 0, 100% 100%, 0 100%);
}

.down {
    bottom: 2px;
    clip-path: polygon(0 0, 100% 0, 50% 100%);
}

.drop {
    display: flex;
    align-items: center;
    width: 45px;
    height: 15px;
    padding-right: 3px;
    background-color: white;
    border: 1px solid #b8b8b8;
}

.drop.small {
    width: 37px;
}

.drop select {
    appearance: none;
    flex: 1;
    min-width: 0;
    padding-left: 3px;
}

.off {
    color: #b5b5b5;
}

.off .pick {
    border-color: #ddd;
    background-color: #efefef;
}

.off .pick > * {
    opacity: 0.5;
}

/* Pointer arrows over the window */
.arrow {
    position: absolute;
}

.arrow.first {
    left: 386px;
    top: 169px;
    width: 98px;
    height: 56px;
}

.arrow.second {
    left: 604px;
    top: 222px;
    width: 18px;
    height: 74px;
}
```
